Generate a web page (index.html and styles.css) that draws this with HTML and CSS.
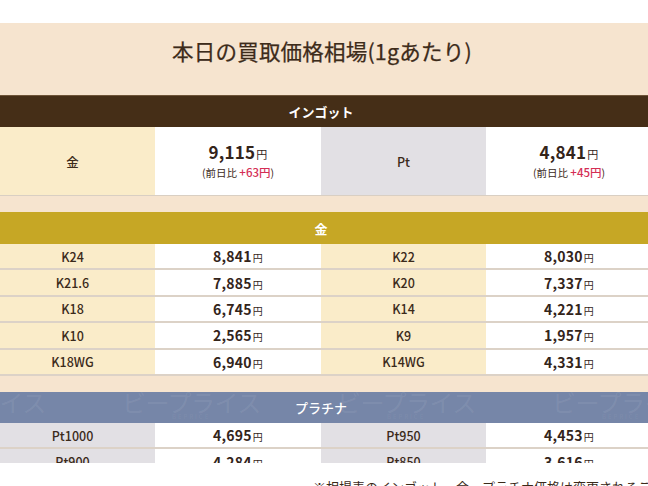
FILE: index.html
```html
<!DOCTYPE html>
<html lang="ja">
<head>
<meta charset="utf-8">
<link rel="stylesheet" href="styles.css">
</head>
<body>
<div class="page">
  <div class="clip">
    <div class="board">
      <h1 class="title">本日の買取価格相場(1gあたり)</h1>

      <div class="bar bar-ingot">インゴット</div>
      <div class="grid ingot">
        <div class="cell lbl gold-lbl">金</div>
        <div class="cell val">
          <div class="price big">9,115<span class="yen">円</span></div>
          <div class="diff">(前日比 <span class="up">+63円</span>)</div>
        </div>
        <div class="cell lbl pt-lbl">Pt</div>
        <div class="cell val">
          <div class="price big">4,841<span class="yen">円</span></div>
          <div class="diff">(前日比 <span class="up">+45円</span>)</div>
        </div>
      </div>

      <div class="spacer"></div>

      <div class="bar bar-gold">金</div>
      <div class="grid rows">
        <div class="cell lbl gold-lbl">K24</div><div class="cell val"><span class="price">8,841<span class="yen">円</span></span></div>
        <div class="cell lbl gold-lbl">K22</div><div class="cell val"><span class="price">8,030<span class="yen">円</span></span></div>
        <div class="cell lbl gold-lbl">K21.6</div><div class="cell val"><span class="price">7,885<span class="yen">円</span></span></div>
        <div class="cell lbl gold-lbl">K20</div><div class="cell val"><span class="price">7,337<span class="yen">円</span></span></div>
        <div class="cell lbl gold-lbl">K18</div><div class="cell val"><span class="price">6,745<span class="yen">円</span></span></div>
        <div class="cell lbl gold-lbl">K14</div><div class="cell val"><span class="price">4,221<span class="yen">円</span></span></div>
        <div class="cell lbl gold-lbl">K10</div><div class="cell val"><span class="price">2,565<span class="yen">円</span></span></div>
        <div class="cell lbl gold-lbl">K9</div><div class="cell val"><span class="price">1,957<span class="yen">円</span></span></div>
        <div class="cell lbl gold-lbl">K18WG</div><div class="cell val"><span class="price">6,940<span class="yen">円</span></span></div>
        <div class="cell lbl gold-lbl">K14WG</div><div class="cell val"><span class="price">4,331<span class="yen">円</span></span></div>
      </div>

      <div class="spacer"></div>

      <div class="bar bar-pt">
        <div class="wm-layer" aria-hidden="true">
          <span class="wm wm1">ビープライス<small>BEPRICE</small></span>
          <span class="wm wm2">ビープライス<small>BEPRICE</small></span>
          <span class="wm wm3">ビープライス<small>BEPRICE</small></span>
          <span class="wm wm4">ビープライス<small>BEPRICE</small></span>
        </div>
        <span class="bar-text">プラチナ</span>
      </div>
      <div class="grid rows">
        <div class="cell lbl pt-lbl">Pt1000</div><div class="cell val"><span class="price">4,695<span class="yen">円</span></span></div>
        <div class="cell lbl pt-lbl">Pt950</div><div class="cell val"><span class="price">4,453<span class="yen">円</span></span></div>
        <div class="cell lbl pt-lbl">Pt900</div><div class="cell val"><span class="price">4,284<span class="yen">円</span></span></div>
        <div class="cell lbl pt-lbl">Pt850</div><div class="cell val"><span class="price">3,616<span class="yen">円</span></span></div>
      </div>
    </div>
  </div>
  <p class="note">※相場表のインゴット・金・プラチナ価格は変更されることがあります。</p>
</div>
</body>
</html>
```

FILE: styles.css
```css
html, body {
  margin: 0;
  padding: 0;
  background: #ffffff;
}
body {
  font-family: "Noto Sans CJK JP", "Noto Sans", sans-serif;
  color: #3b2a1a;
  overflow: hidden;
}
.page {
  width: 648px;
  height: 486px;
  overflow: hidden;
  padding-top: 23px;
  box-sizing: border-box;
}
.clip {
  height: 440px;
  overflow: hidden;
}
.board {
  background: #f6e4cf;
  margin-left: -10px;
  width: 662px;
}
.title {
  margin: 0;
  height: 72px;
  display: flex;
  align-items: flex-start;
  justify-content: center;
  padding-top: 13px;
  font-size: 21.5px;
  line-height: 30px;
  font-weight: 400;
  color: #3d2b1a;
  letter-spacing: 0.2px;
  padding-left: 2px;
  box-sizing: border-box;
  -webkit-text-stroke: 0.25px #3d2b1a;
}
.bar {
  height: 32px;
  display: flex;
  align-items: center;
  justify-content: center;
  color: #ffffff;
  font-size: 13px;
  font-weight: 700;
  position: relative;
  overflow: hidden;
}
.bar-ingot {
  background: #452e17;
  border-top: 1px solid #6e5438;
  box-sizing: border-box;
}
.bar-gold {
  background: #c6a725;
}
.bar-pt {
  background: #7686a8;
  height: 31px;
  font-weight: 500;
}
.bar-text {
  position: relative;
}
.wm-layer {
  position: absolute;
  inset: 0;
}
.wm {
  position: absolute;
  top: -3px;
  font-size: 24px;
  font-weight: 400;
  color: rgba(255, 255, 255, 0.08);
  white-space: nowrap;
  line-height: 26px;
  letter-spacing: -0.5px;
}
.wm small {
  position: absolute;
  left: 50px;
  top: 24px;
  font-size: 6px;
  letter-spacing: 2px;
  line-height: 7px;
}
.wm1 { left: -83px; }
.wm2 { left: 132px; }
.wm3 { left: 347px; }
.wm4 { left: 562px; }

.grid {
  display: grid;
  grid-template-columns: 165px 166px 165px 166px;
}
.cell {
  display: flex;
  flex-direction: column;
  align-items: center;
  justify-content: center;
  background: #ffffff;
}
.gold-lbl {
  background: #faecc9;
}
.pt-lbl {
  background: #e2e0e4;
}
.lbl {
  font-size: 12.5px;
  font-weight: 500;
  color: #3b2a1a;
}
.ingot .cell {
  height: 68px;
  border-bottom: 1px solid #d9cfc3;
}
.rows .cell {
  height: 24.4px;
  border-bottom: 2px solid #dcd2c7;
}
.price {
  font-size: 14px;
  font-weight: 700;
  color: #33241a;
  letter-spacing: 0.2px;
}
.price.big {
  font-size: 17px;
  line-height: 20px;
}
.yen {
  font-size: 10px;
  font-weight: 400;
  margin-left: 1px;
}
.price.big .yen {
  font-size: 11px;
}
.diff {
  font-size: 10.5px;
  color: #3b2a1a;
  margin-top: 1px;
  line-height: 14px;
}
.up {
  color: #d42e55;
  font-size: 11.5px;
  font-weight: 500;
}
.spacer {
  height: 16px;
  background: #f6e4cf;
}
.note {
  margin: 0;
  padding: 16px 0 0 313px;
  font-size: 13px;
  color: #3b2a1a;
  white-space: nowrap;
  line-height: 16px;
}
```
